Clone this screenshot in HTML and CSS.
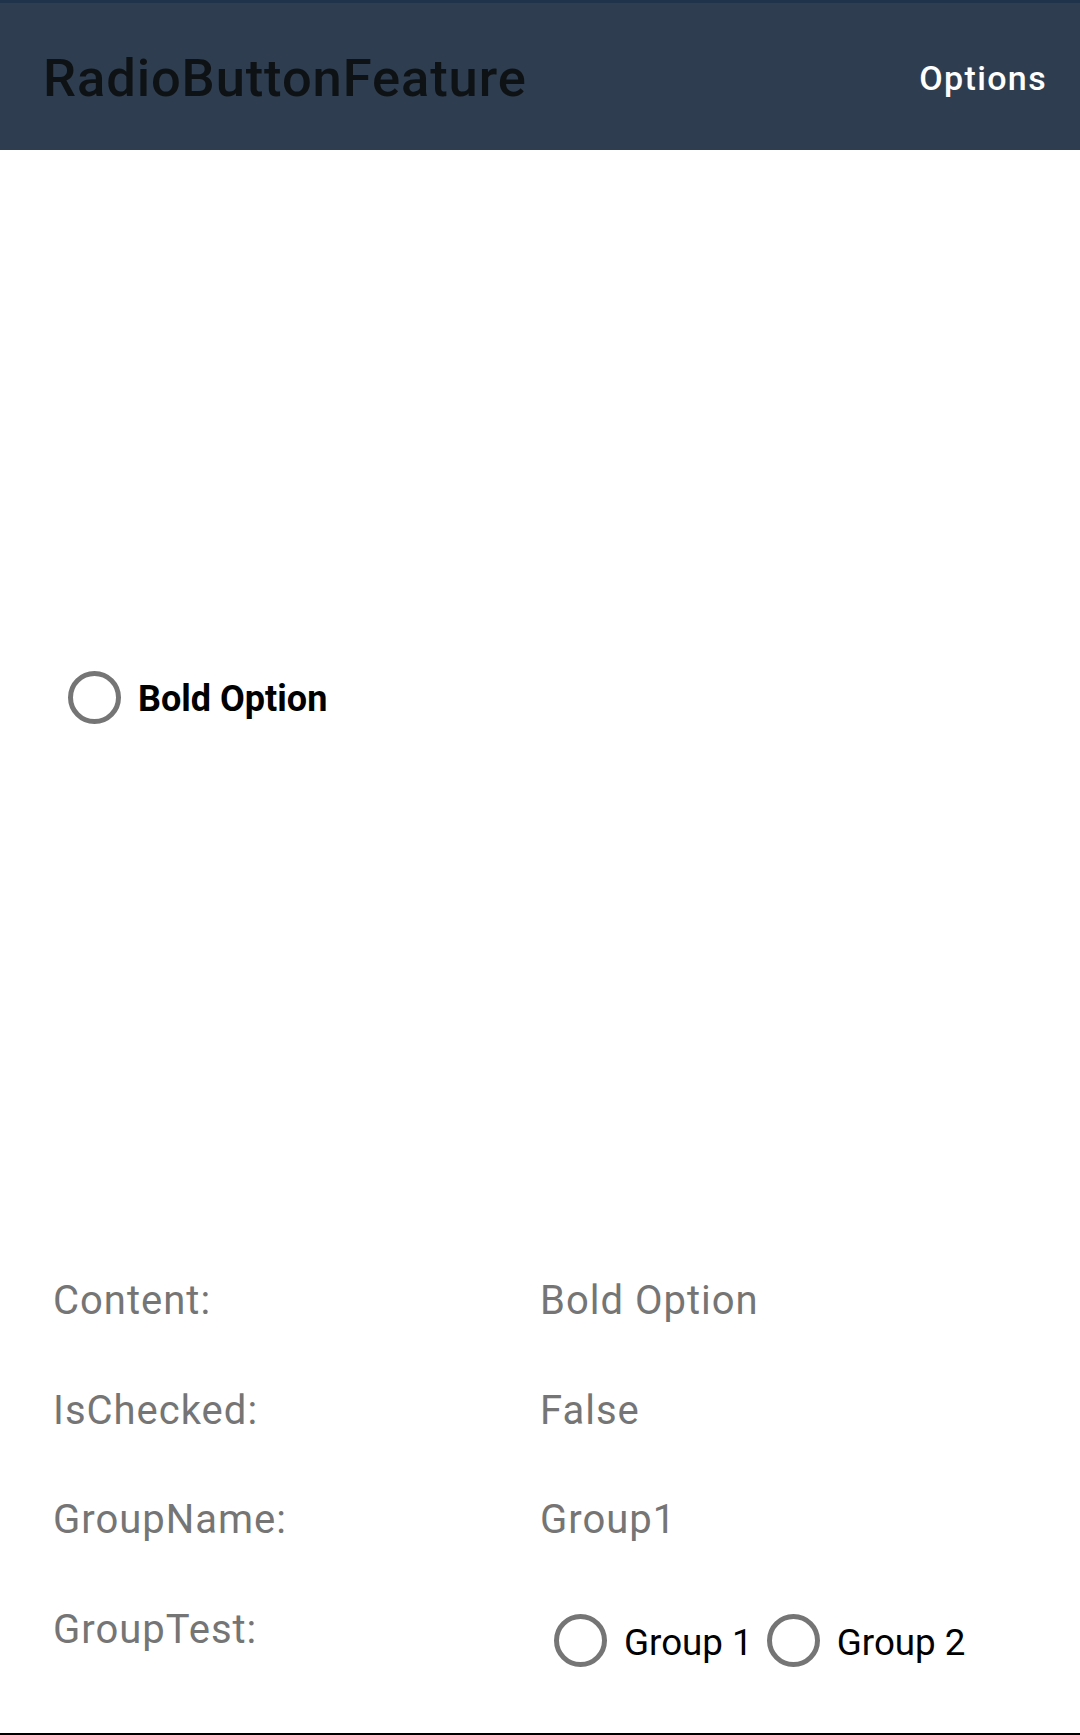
FILE: index.html
```html
<!DOCTYPE html>
<html>
<head>
<meta charset="utf-8">
<link rel="stylesheet" href="styles.css">
</head>
<body>
<div class="app">
  <header class="toolbar">
    <div class="title">RadioButtonFeature</div>
    <div class="menu">Options</div>
  </header>
  <main class="content">
    <div class="stage">
      <label class="radio radio-bold">
        <span class="circle"></span>
        <span class="radio-text">Bold Option</span>
      </label>
    </div>
    <div class="props">
      <div class="prop-label">Content:</div>
      <div class="prop-value">Bold Option</div>
      <div class="prop-label">IsChecked:</div>
      <div class="prop-value">False</div>
      <div class="prop-label">GroupName:</div>
      <div class="prop-value">Group1</div>
      <div class="prop-label">GroupTest:</div>
      <div class="prop-value group-test">
        <label class="radio">
          <span class="circle"></span>
          <span class="radio-text">Group 1</span>
        </label>
        <label class="radio">
          <span class="circle"></span>
          <span class="radio-text">Group 2</span>
        </label>
      </div>
    </div>
  </main>
</div>
</body>
</html>
```

FILE: styles.css
```css
html, body {
  margin: 0;
  padding: 0;
  background: #ffffff;
}

body {
  font-family: Roboto, "Noto Sans", "Liberation Sans", sans-serif;
}

.app {
  width: 1080px;
  height: 1735px;
  display: flex;
  flex-direction: column;
  box-sizing: border-box;
  border-bottom: 2px solid #000000;
}

.toolbar {
  height: 147px;
  border-top: 3px solid #1f334a;
  background: #2e3e50;
  display: flex;
  align-items: center;
  justify-content: space-between;
  padding: 0 33px 0 43px;
  flex-shrink: 0;
}

.title {
  font-size: 52.5px;
  font-weight: 500;
  letter-spacing: 0.9px;
  color: #0f1215;
  margin-top: 2px;
}

.menu {
  font-size: 34px;
  font-weight: 500;
  color: #ffffff;
  letter-spacing: 0.04em;
  margin-top: 2px;
}

.content {
  flex: 1;
  display: flex;
  flex-direction: column;
}

.stage {
  height: 1128px;
  box-sizing: border-box;
  padding: 521px 0 0 68px;
}

.radio {
  display: flex;
  align-items: center;
  gap: 17px;
  color: #000000;
  font-size: 36.75px;
}

.radio-bold {
  font-size: 36px;
  font-weight: 700;
}

.circle {
  width: 53px;
  height: 53px;
  box-sizing: border-box;
  border: 5px solid #757575;
  border-radius: 50%;
  flex-shrink: 0;
}

.radio-text {
  line-height: 43px;
  margin-top: 4px;
}

.props {
  display: grid;
  grid-template-columns: 487px 1fr;
  grid-auto-rows: 109.5px;
  padding-left: 53px;
  font-size: 40px;
  letter-spacing: 0.025em;
  color: #757575;
}

.prop-label,
.prop-value {
  line-height: 46px;
}

.group-test {
  display: flex;
  align-items: center;
  gap: 14px;
  margin-left: 14px;
  margin-top: 7px;
  height: 53px;
  letter-spacing: 0;
}
```
